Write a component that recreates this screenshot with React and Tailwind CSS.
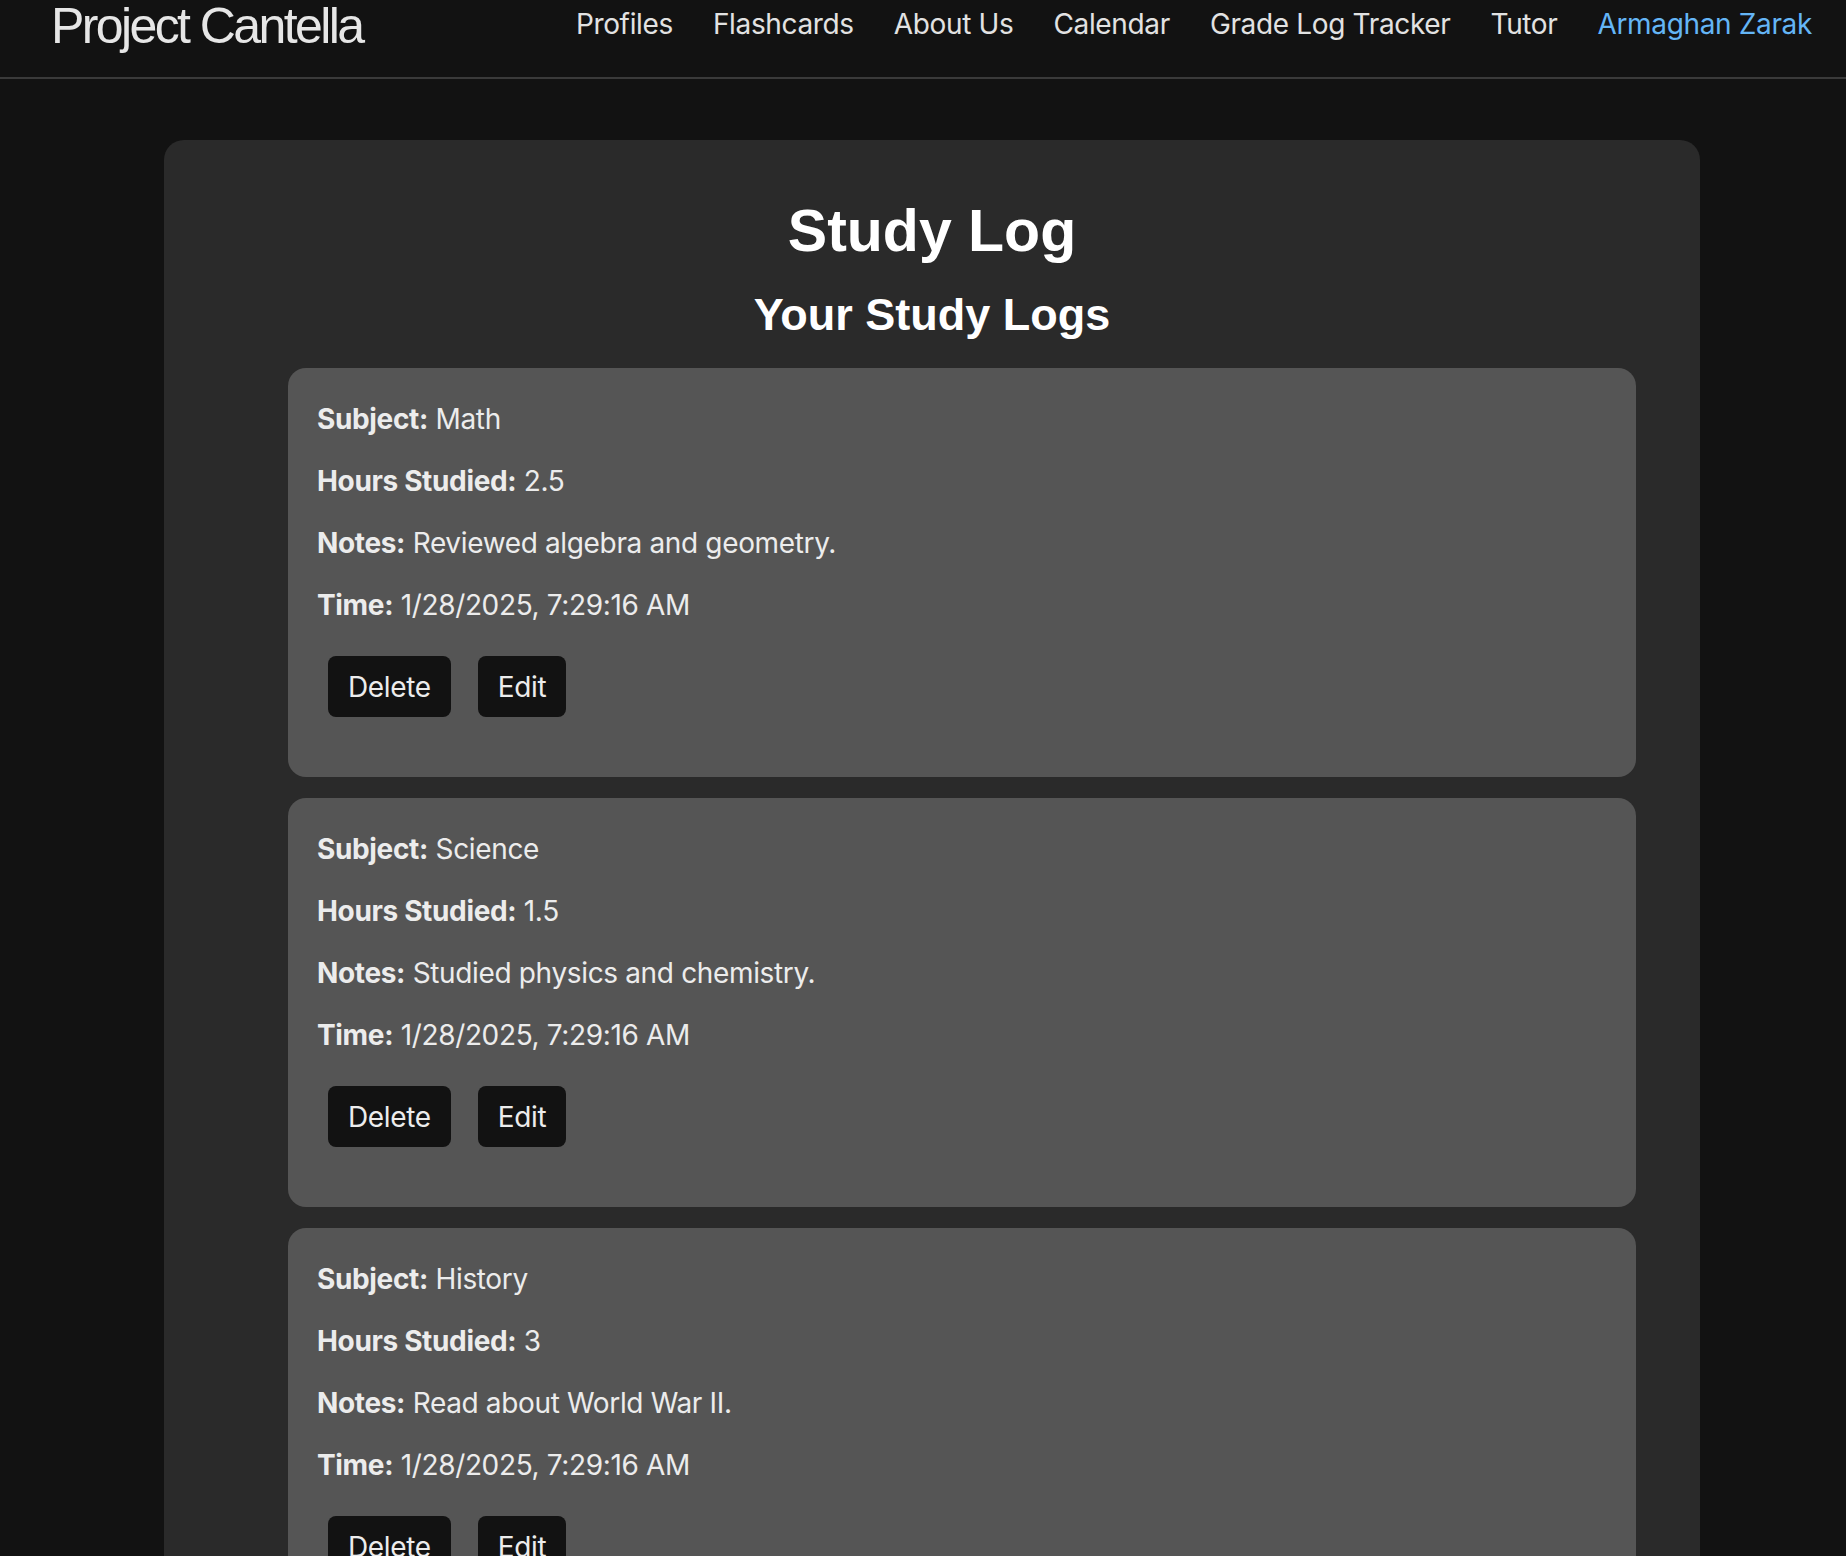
import React from 'react';

const navLinks = ['Profiles', 'Flashcards', 'About Us', 'Calendar', 'Grade Log Tracker', 'Tutor'];

const logs = [
  { subject: 'Math', hours: '2.5', notes: 'Reviewed algebra and geometry.', time: '1/28/2025, 7:29:16 AM' },
  { subject: 'Science', hours: '1.5', notes: 'Studied physics and chemistry.', time: '1/28/2025, 7:29:16 AM' },
  { subject: 'History', hours: '3', notes: 'Read about World War II.', time: '1/28/2025, 7:29:16 AM' },
];

const Field = ({ label, value }) => (
  <p className="leading-[34px]">
    <strong className="font-bold">{label}:</strong> {value}
  </p>
);

const LogCard = ({ subject, hours, notes, time }) => (
  <li className="bg-[#555555] rounded-[18px] pl-[29px] pr-[30px] pt-[34px] pb-[60px] text-[28px] tracking-[-0.35px] text-[#ececec]">
    <div className="flex flex-col gap-[28px]">
      <Field label="Subject" value={subject} />
      <Field label="Hours Studied" value={hours} />
      <Field label="Notes" value={notes} />
      <Field label="Time" value={time} />
    </div>
    <div className="flex gap-[27px] ml-[11px] mt-[34px]">
      <button className="h-[61px] px-[20px] inline-flex items-center rounded-[8px] bg-[#121212] text-[#ececec] leading-[34px]">
        Delete
      </button>
      <button className="h-[61px] px-[20px] inline-flex items-center rounded-[8px] bg-[#121212] text-[#ececec] leading-[34px]">
        Edit
      </button>
    </div>
  </li>
);

export default function App() {
  return (
    <div className="min-h-screen bg-[#121212] text-white font-['Inter',sans-serif] overflow-hidden">
      {/* Navbar */}
      <header className="h-[79px] border-b-[2px] border-[#3a3a3a] flex justify-between pl-[51px] pr-[34px]">
        <div className="mt-[1px] font-['Liberation_Sans',Arial,sans-serif] text-[50px] leading-none tracking-[-2.6px] text-[#e6e6e6]">
          Project Cantella
        </div>
        <nav className="flex gap-[40px] mt-[10px] text-[28px] leading-none tracking-[-0.35px] text-[#e2e2e2]">
          {navLinks.map((link) => (
            <a key={link} href="#" className="whitespace-nowrap">{link}</a>
          ))}
          <a href="#" className="whitespace-nowrap text-[#64b5f6]">Armaghan Zarak</a>
        </nav>
      </header>

      {/* Main */}
      <main className="pt-[61px] pl-[164px] pr-[146px]">
        <section className="bg-[#2a2a2a] rounded-[20px] px-[64px] pt-[62px] pb-[64px]">
          <h1 className="text-center font-['Liberation_Sans',Arial,sans-serif] font-bold text-[59px] leading-none text-white">
            Study Log
          </h1>
          <h2 className="mt-[31px] text-center font-['Liberation_Sans',Arial,sans-serif] font-bold text-[45px] leading-none text-white">
            Your Study Logs
          </h2>
          <ul className="mt-[31px] ml-[60px] flex flex-col gap-[21px]">
            {logs.map((log, idx) => (
              <LogCard key={idx} {...log} />
            ))}
          </ul>
        </section>
      </main>
    </div>
  );
}
